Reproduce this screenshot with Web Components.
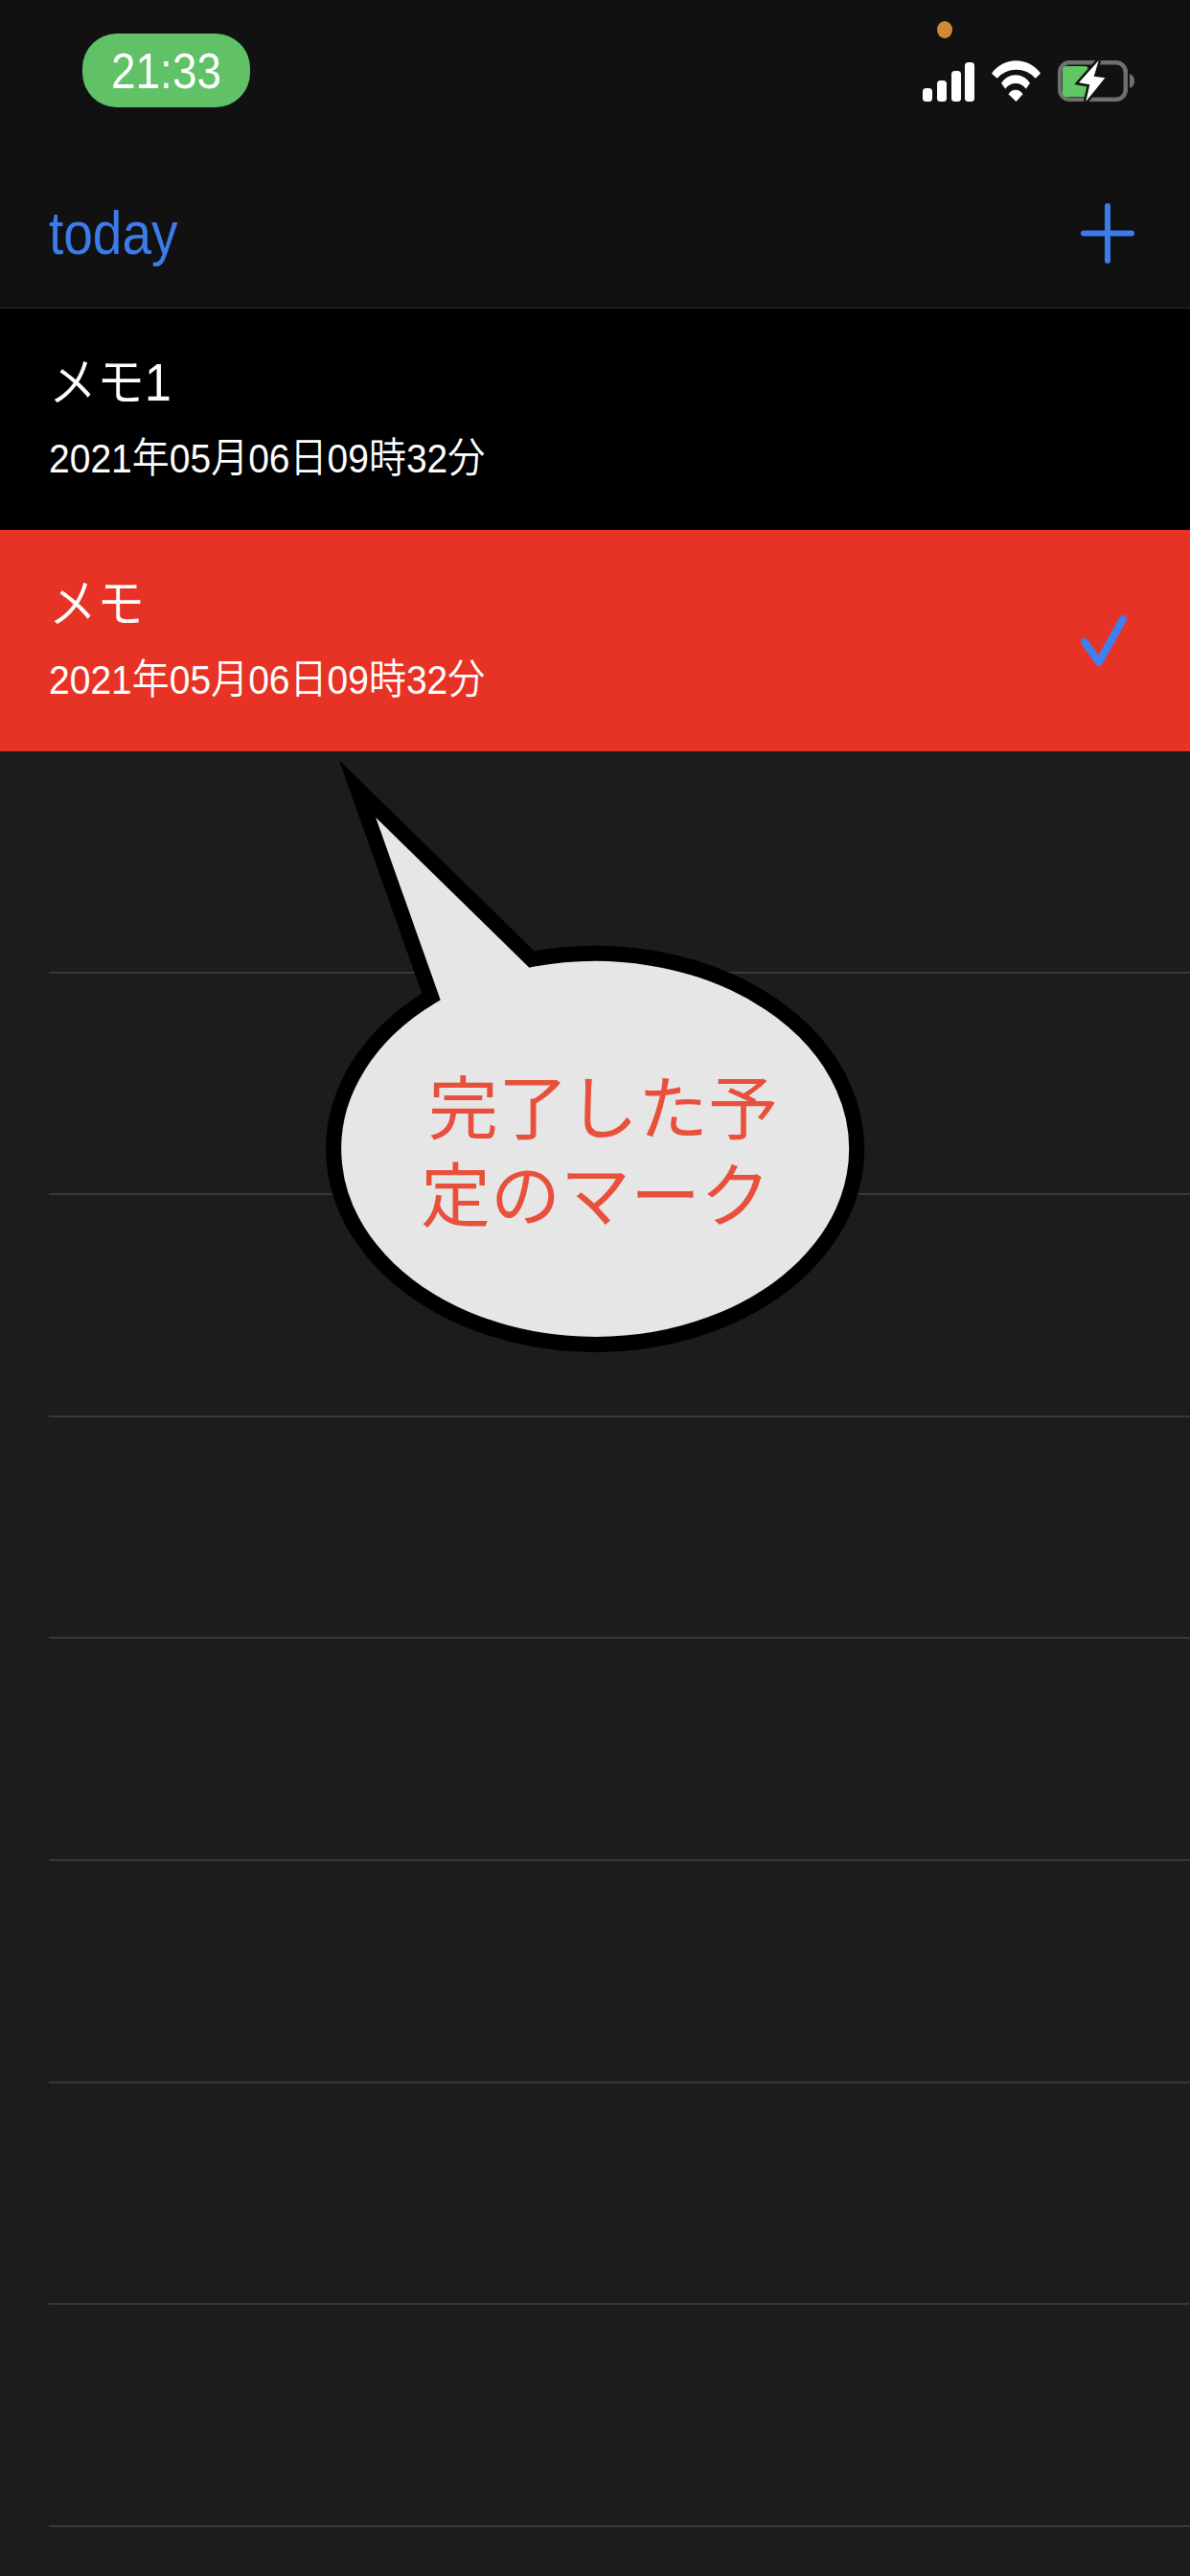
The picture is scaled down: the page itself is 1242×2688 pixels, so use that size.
<!DOCTYPE html>
<html lang="ja">
<head>
<meta charset="utf-8">
<title>today</title>
<style>
  html, body { margin: 0; padding: 0; background: #1c1c1e; }
  body { font-family: "Liberation Sans", "Noto Sans CJK JP", sans-serif; color: #fff; }
</style>
</head>
<body>
<memo-app>
  <status-bar slot="top" time="21:33"></status-bar>
  <nav-header slot="top" title="today"></nav-header>
  <memo-row title="メモ1" date="2021年05月06日09時32分"></memo-row>
  <memo-row title="メモ" date="2021年05月06日09時32分" done></memo-row>
  <empty-row></empty-row>
  <empty-row></empty-row>
  <empty-row></empty-row>
  <empty-row></empty-row>
  <empty-row></empty-row>
  <empty-row></empty-row>
  <empty-row></empty-row>
  <empty-row></empty-row>
  <speech-bubble slot="over">完了した予定のマーク</speech-bubble>
</memo-app>

<script>
  // Page shell: dark header on top, list under it, callout over everything
  class MemoApp extends HTMLElement {
    constructor() {
      super();
      this.attachShadow({ mode: 'open' });
      this.shadowRoot.innerHTML = `
        <style>
          :host { display: block; position: relative; width: 1242px; height: 2688px; overflow: hidden; background: #1c1c1e; }
          header { height: 322px; box-sizing: border-box; background: #111112; border-bottom: 1px solid #2b2b2c; display: flex; flex-direction: column; }
          main { display: flex; flex-direction: column; }
        </style>
        <header><slot name="top"></slot></header>
        <main><slot></slot></main>
        <slot name="over"></slot>
      `;
    }
  }

  class StatusBar extends HTMLElement {
    constructor() {
      super();
      this.attachShadow({ mode: 'open' });
      this.shadowRoot.innerHTML = `
        <style>
          :host { display: flex; justify-content: space-between; align-items: flex-start; position: relative; height: 150px; padding: 0 58px 0 86px; }
          .pill { margin-top: 35px; width: 175px; height: 77px; border-radius: 36px; background: #60c166; color: #fff; display: flex; align-items: center; justify-content: center; font-size: 46px; line-height: 1; }
          .time { display: block; transform: scale(1, 1.12); }
          .icons { margin-top: 63px; display: flex; gap: 18px; align-items: flex-start; }
          svg { display: block; }
          .dot { position: absolute; left: 978px; top: 22px; width: 16px; height: 18px; border-radius: 50%; background: #cf8b33; }
        </style>
        <div class="pill"><span class="time"></span></div>
        <div class="icons">
          <svg width="55" height="43" viewBox="0 0 55 43" fill="#fff">
            <rect x="1" y="29" width="10" height="14" rx="3.5"/>
            <rect x="16" y="21" width="10" height="22" rx="3.5"/>
            <rect x="31" y="11" width="10" height="32" rx="3.5"/>
            <rect x="45" y="2" width="10" height="41" rx="3.5"/>
          </svg>
          <svg width="51" height="43" viewBox="0 0 51 43" fill="#fff">
            <path d="M0 13.700A31 31 0 0 1 51 13.700L45.700 18.700A26.700 26.700 0 0 0 5.700 18.700Z"/>
            <path d="M10 23.700A17.600 17.600 0 0 1 40 23.700L35.700 29.700A13 13 0 0 0 14.300 29.700Z"/>
            <path d="M18 35.300A8 8 0 0 1 32 35.300L25.500 42.500Z" stroke="#fff" stroke-linejoin="round"/>
          </svg>
          <svg width="80" height="43" viewBox="0 0 80 43">
            <rect x="2.200" y="2.200" width="68.600" height="38.600" rx="10" fill="none" stroke="#6f6f6f" stroke-width="4.500"/>
            <rect x="5" y="6" width="27" height="32" rx="4" fill="#5fc864"/>
            <path d="M75 14q5 2 5 7.500t-5 7.500z" fill="#6f6f6f"/>
            <path d="M42.700 0L22 23.300L33.300 25.300L29.300 43L49.300 18.300L37.700 16.700Z" fill="#fff" stroke="#111112" stroke-width="5" paint-order="stroke"/>
          </svg>
        </div>
        <div class="dot"></div>
      `;
    }
    connectedCallback() {
      this.shadowRoot.querySelector('.time').textContent = this.getAttribute('time');
    }
  }

  class NavHeader extends HTMLElement {
    constructor() {
      super();
      this.attachShadow({ mode: 'open' });
      this.shadowRoot.innerHTML = `
        <style>
          :host { display: flex; justify-content: space-between; align-items: center; height: 171px; box-sizing: border-box; padding: 0 58px 0 51px; }
          .title { color: #3b7bea; font-size: 55px; line-height: 1; margin-top: 21px; transform: scaleY(1.13); transform-origin: center 46px; }
          svg { display: block; margin-top: 16px; }
        </style>
        <div class="title"></div>
        <svg width="56" height="63" viewBox="0 0 56 63" fill="none" stroke="#3b7bea" stroke-width="6" stroke-linecap="round">
          <path d="M28 3V60M3 31.500H53"/>
        </svg>
      `;
    }
    connectedCallback() {
      this.shadowRoot.querySelector('.title').textContent = this.getAttribute('title');
    }
  }

  class MemoRow extends HTMLElement {
    constructor() {
      super();
      this.attachShadow({ mode: 'open' });
      this.shadowRoot.innerHTML = `
        <style>
          :host { display: flex; align-items: center; justify-content: space-between; height: 231px; box-sizing: border-box; padding: 0 66px 0 51px; background: #000; }
          :host([done]) { background: #e73325; }
          .text { display: flex; flex-direction: column; gap: 27px; margin-bottom: 5px; font-weight: 350; }
          .title { font-size: 50px; line-height: 60px; transform: scaleY(1.1); }
          .date { font-size: 39px; line-height: 46px; transform: scaleY(1.1); }
          svg { display: none; }
          :host([done]) svg { display: block; }
        </style>
        <div class="text">
          <div class="title"></div>
          <div class="date"></div>
        </div>
        <svg width="48" height="53" viewBox="0 0 48 53" fill="none" stroke="#3f7ff0" stroke-width="8" stroke-linecap="round" stroke-linejoin="round">
          <path d="M4 28L19 49L44 4"/>
        </svg>
      `;
    }
    connectedCallback() {
      this.shadowRoot.querySelector('.title').textContent = this.getAttribute('title');
      this.shadowRoot.querySelector('.date').textContent = this.getAttribute('date');
    }
  }

  class EmptyRow extends HTMLElement {
    constructor() {
      super();
      this.attachShadow({ mode: 'open' });
      this.shadowRoot.innerHTML = `
        <style>
          :host { display: block; height: 231.6px; box-sizing: border-box; margin-left: 51px; border-bottom: 2px solid #38383a; }
        </style>
      `;
    }
  }

  // Annotation drawn on top of the list, free placement is the point here
  class SpeechBubble extends HTMLElement {
    constructor() {
      super();
      this.attachShadow({ mode: 'open' });
      this.shadowRoot.innerHTML = `
        <style>
          :host { display: block; position: absolute; left: 340px; top: 790px; width: 570px; height: 630px; }
          svg { position: absolute; left: 0; top: 0; }
          .label { position: absolute; left: 99px; top: 316px; width: 380px; text-indent: 8px; font-size: 73px; line-height: 91px; color: #e8503c; font-family: "Noto Sans CJK JP", sans-serif; font-weight: 400; }
        </style>
        <svg width="570" height="630" viewBox="340 790 570 630">
          <path d="M450 1040L373 823L555 1001A273 204 0 1 1 450 1040Z" fill="#e6e6e6" stroke="#000" stroke-width="16" stroke-miterlimit="10"/>
        </svg>
        <div class="label"><slot></slot></div>
      `;
    }
  }

  customElements.define('memo-app', MemoApp);
  customElements.define('status-bar', StatusBar);
  customElements.define('nav-header', NavHeader);
  customElements.define('memo-row', MemoRow);
  customElements.define('empty-row', EmptyRow);
  customElements.define('speech-bubble', SpeechBubble);
</script>
</body>
</html>
